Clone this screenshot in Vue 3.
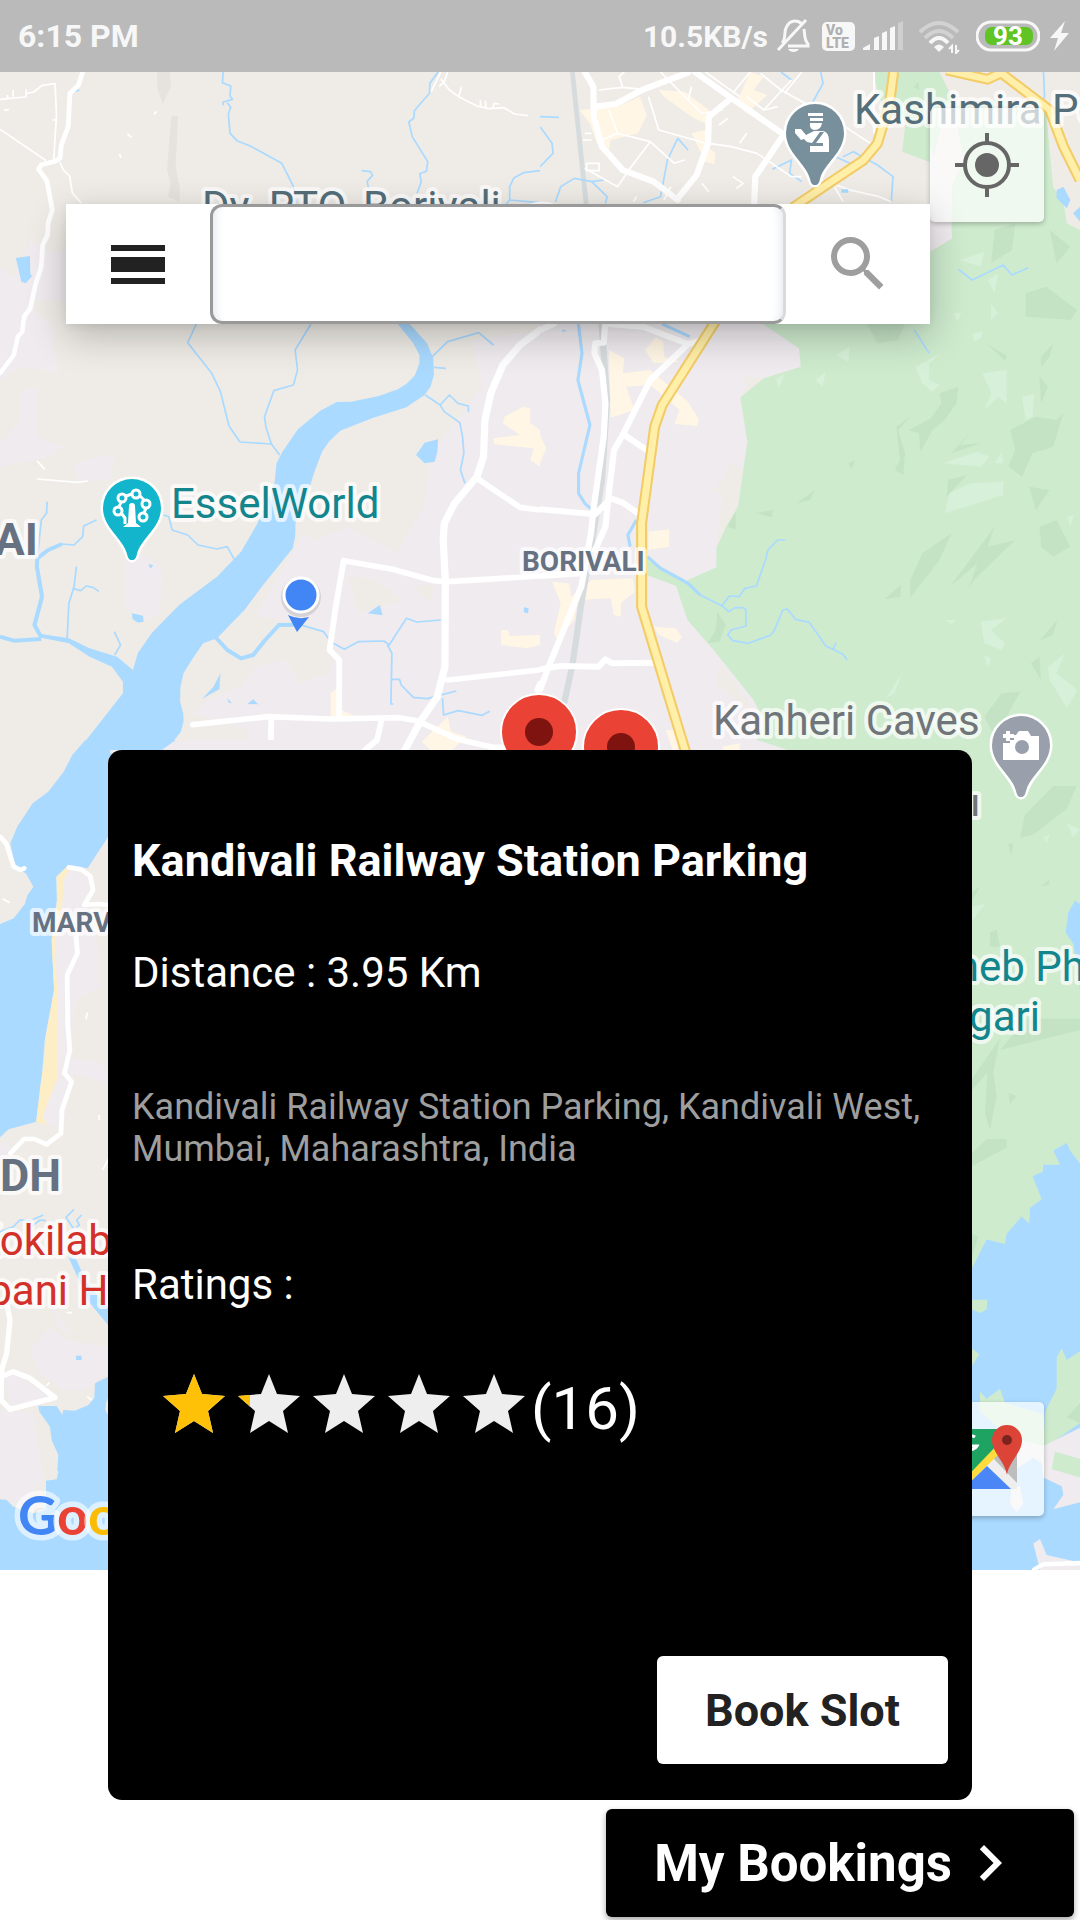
<script setup>
import { ref } from 'vue'

const query = ref('')

const place = {
  name: 'Kandivali Railway Station Parking',
  distance: '3.95 Km',
  address: 'Kandivali Railway Station Parking, Kandivali West, Mumbai, Maharashtra, India',
  reviews: 16,
}

// Width of the golden part of every star, in star units (0 to 62)
const stars = [62, 12, 0, 0, 0]
const starPath = 'M31 0l8 20 23 2-17 15 5 22-19-12-19 12 5-22L0 22l23-2z'
const pinPath = 'M0 52C-3 52-4 50-5 46-9 30-29 20-29 0A29 29 0 0 1 29 0C29 20 9 30 5 46 4 50 3 52 0 52z'
</script>

<template>
  <main class="screen">
    <header class="status">
      <time class="clock">6:15 PM</time>
      <div class="indicators">
        <span class="speed">10.5KB/s</span>
        <svg width="38" height="36" viewBox="0 0 38 36" fill="none" stroke="#f7f7f7" stroke-width="3">
          <path d="M6 25C10 22 8 14 10 10 12 5 16 3 19 3c3 0 5 1 7 3M28 11c1 6 0 11 4 15v2H12M2 32L30 2" />
          <path d="M12 31h11c-2 4-9 4-11 0z" fill="#f7f7f7" stroke="none" />
        </svg>
        <svg width="33" height="36" viewBox="0 0 33 36">
          <rect y="4" width="33" height="29" rx="5" fill="#f7f7f7" />
          <text x="4" y="17" class="volte">Vo</text>
          <text x="4" y="30" class="volte">LTE</text>
        </svg>
        <svg width="47" height="36" viewBox="0 0 47 36" fill="#f7f7f7">
          <path d="M0 32v-2l7-4v6zM11 20l5-2v14h-5zM19 15l5-2v19h-5zM27 10l5-2v24h-5z" />
          <path d="M35 5l5-2v29h-5z" opacity=".35" />
        </svg>
        <svg width="50" height="36" viewBox="0 0 50 36" fill="none" stroke="#f7f7f7" stroke-width="4">
          <path d="M2 14Q21-4 40 14M7 20Q21 6 35 20" opacity=".4" />
          <path d="M12 25Q21 15 30 25" />
          <path d="M16 29q5-5 10 0l-5 5z" fill="#f7f7f7" stroke="none" />
          <path d="M34 35v-7l-3 3M38 27v8l3-3" stroke-width="2" />
        </svg>
        <svg width="64" height="36" viewBox="0 0 64 36">
          <rect x="1" y="4" width="62" height="28" rx="14" fill="none" stroke="#f7f7f7" stroke-width="3" />
          <rect x="9" y="9" width="48" height="18" rx="7" fill="#5fc424" />
          <text x="32" y="27" class="charge">93</text>
        </svg>
        <svg width="22" height="36" viewBox="0 0 22 36"><path d="M17 3L2 20h8L6 33 21 15h-8z" fill="#f7f7f7" /></svg>
      </div>
    </header>

    <section class="map" aria-label="Map">
      <svg class="canvas" viewBox="0 72 1080 1498" preserveAspectRatio="xMidYMin slice">
        <rect y="72" width="1080" height="1498" fill="#efece7" />

        <!-- North west -->
        <svg x="0" y="0" width="540" height="360" viewBox="0 0 1568 1080" preserveAspectRatio="none">
          <path class="urban" d="M0 805L40 830 90 720 130 750 190 760V900H80L130 960 165 1010 90 1080H0z" />
          <path class="shade" d="M456 216H494L496 262 472 312 456 260zM498 348H517L510 500 522 560V605L488 590 495 550 485 510z" />
          <path class="water" d="M46 774L87 768 88 822 93 828 75 850 62 845z" />
          <path class="stream" d="M648 216L646 248 670 258 668 288 675 298 648 306V316M660 308L670 322 663 342 668 400 688 422 725 437 818 490 836 526 852 560 862 610M1272 216L1248 250 1247 280 1203 332 1202 354 1187 366 1197 410 1242 485 1238 514 1219 521 1223 546 1211 580M1050 512L1076 515 1082 526 1066 544 1070 565M1568 512L1520 518 1492 534 1480 560V600L1470 612M1480 600L1568 608M220 274L230 270" />
          <path class="lane" d="M0 298L74 291 78 280 98 276 122 256 160 251 164 345 156 480M0 388L80 444 134 482M174 486L184 510 202 528 210 578 235 608M22 298V285M38 290V270M76 290V268M152 360H166M12 331L26 328M370 402L382 412M447 343L455 334M347 462L351 473M1280 216L1252 275M1300 216L1290 245 1275 260M1280 236L1305 270 1332 290 1385 318 1420 326 1463 323 1494 342 1534 347M1332 290L1340 262M1395 318V300M1410 322V302M1430 325L1435 310 1450 312" />
          <path class="road" stroke-width="14" d="M240 216L228 255 203 280 198 380 178 435 174 475 160 484 120 494 112 508 136 542 152 630 140 668 138 706 124 735 120 800 104 850 88 925 70 950 68 1000 50 1020 38 1080" />
        </svg>

        <!-- North east -->
        <svg x="540" y="0" width="540" height="360" viewBox="0 0 1568 1080" preserveAspectRatio="none">
          <path class="park" d="M972 216H1160L1195 290 1230 480 1195 560V715L1132 755V1080H1568V690L1530 670 1520 610 1490 560 1470 340 1340 300 1180 310 1140 490 1052 455 1062 360 1000 340 975 250z" />
          <path class="urban" d="M1132 440L1180 560 1197 715 1132 755z" />
          <path class="park-dark" d="M1085 260L1100 245V270zM1320 690L1380 670 1370 750 1310 790zM1410 880L1470 860 1560 930 1540 960 1410 950zM1480 690L1540 740 1500 790z" />
          <path class="park-light" d="M1220 780L1290 755 1280 800zM1300 840L1330 820 1320 880zM1200 940H1225L1212 965zM1310 910L1330 940 1310 960z" />
          <path class="block" d="M115 330L225 320 290 290 310 345 285 400 205 420 200 455 165 430 145 370zM345 270L420 275 490 330V375L440 350 360 290zM610 216L650 230 620 270 660 285 600 340 570 310zM440 400L480 390 485 440 510 460 505 492 480 485z" />
          <path class="rail" stroke-width="14" d="M94 216L134 612" />
          <path class="stream" d="M700 216L730 240M815 216L822 250 790 310M0 350L55 352M0 380L35 430 38 460 0 500M45 605L60 560 100 535 150 545 195 590 190 610M150 545L185 540M300 608L350 590 370 480 400 415 430 450M675 508L730 480 725 520 760 545M880 470L910 455 980 495 1025 530 1020 605M835 460L900 490 925 480M1462 216L1465 290 1450 330M1215 808L1255 840 1345 795 1370 825 1418 803" />
          <path class="lane" d="M970 216V400M170 270L240 262 230 230 245 216M240 262L300 268M315 290L345 390 490 432M490 430L555 440 630 460 730 530 760 530M130 400H150M125 420H150M135 490H172V512H135zM180 420L225 400 320 425 265 500 225 560 130 505M320 425L390 490 420 480M200 330L225 400M350 216L430 300 440 260M430 300L470 340 530 330M480 216L580 290M610 216L560 280M730 240L650 330 690 320M650 330L600 290M640 220L700 270 840 350 960 430M760 216L710 280M520 375L545 355M600 400L580 430M470 550L490 575M560 530L590 550 570 565M820 540L900 570 985 590 1020 605M855 560L880 605M380 560L360 600M280 590L272 605" />
          <path class="road" stroke-width="18" d="M130 216L155 260 156 350 180 440 240 510 330 545 400 600M155 320L220 312 300 268 430 218M450 216L550 290 710 405M555 295L490 350 488 430 455 525 400 595M700 415L625 530 622 612" />
          <path class="highway-edge" d="M1027 216L1015 310 980 430 940 480 735 622M1180 210L1300 238 1345 216M1335 216L1480 330 1520 440 1568 540" />
          <path class="highway" d="M1027 216L1015 310 980 430 940 480 735 622M1180 210L1300 238 1345 216M1335 216L1480 330 1520 440 1568 540" />
          <path class="water" d="M1500 570L1520 560 1540 600 1530 625 1500 595zM1548 640L1568 620V665zM875 568H895V578H875z" />
        </svg>

        <!-- West -->
        <svg x="0" y="320" width="540" height="440" viewBox="0 0 1568 1320" preserveAspectRatio="none">
          <path class="urban" d="M1370 60L1568 30V1320H700L720 1230 560 1180 600 1140 700 1100 740 1040 830 1020 870 1090 950 1060 985 1000 900 910 740 890 880 640 920 660 1010 620 1050 640 1150 700 1230 560 1250 400 1400 200zM0 0H140L170 160 60 140 0 180zM60 210L110 200 110 350 185 380 150 410 0 440V370L60 300zM215 430L335 400 320 480 220 485zM390 690L470 740 465 880 420 900 360 860V720z" />
          <path class="land" d="M1010 770L1090 780 1170 840 1040 880zM1200 800L1260 790 1250 850z" />
          <path class="block" d="M1432 355L1510 345 1460 310 1465 290 1520 260 1540 265V310L1568 330V440L1540 420 1550 385 1435 373zM1455 930H1475L1480 948 1568 945V975L1530 985 1455 975zM960 1120L985 1100 990 1170 1060 1200 960 1205zM1225 1265L1300 1190 1310 1235 1355 1250 1280 1320z" />
          <path class="water" d="M1155 12L1200 70 1218 105V130L1205 165 1180 192 1155 208 1100 228 1020 245 978 246 930 272 865 328 820 395 803 430 797 490 770 560 745 615 700 695 630 770 520 855 440 940 400 1000 386 1050 340 1010 260 985 200 955 120 942 112 952 200 970 260 1010 325 1040 357 1085V1120L205 1320H400L465 1290 500 1268 525 1235 533 1205 532 1180 523 1145 524 1100 533 1060 560 1015 590 970 630 955 710 870 760 800 850 685 857 650 858 610 890 530 915 450 935 395 955 365 988 332 1080 295 1180 262 1233 225 1250 200 1260 165 1258 115 1240 70 1190 12z" />
          <path class="water" d="M1208 405L1233 368 1272 358 1270 395 1262 425 1233 430zM1068 880L1103 855 1111 886zM383 880L415 887 417 905 400 908 385 897zM1521 862L1535 865 1533 880 1521 877zM587 1136L620 1100 640 1060 637 1108zM718 1152L735 1138 750 1153zM660 1135L674 1150 664 1148zM431 733L445 735 437 746z" />
          <path class="stream" stroke-width="12" d="M120 952L100 915 122 830 107 740 108 715 140 690 180 672M620 945L660 990 700 1015 735 1005 770 960 810 915 870 914M0 950L40 962 120 957" />
          <path class="stream" d="M180 672L215 675 240 650 243 618 280 600M195 955L200 850 215 800 222 740M210 805L235 812 250 798 270 802 287 814M110 700L120 600 135 580 137 545M333 1005L350 975 332 935M475 585L490 590 500 630 545 645 575 675 630 687 660 680 680 718M870 914L940 935 960 965 1000 988 1040 965 1115 963 1130 975 1180 895 1210 906 1280 900M1125 975L1138 1000 1135 1152H1142M1138 1078H1160L1165 1095 1200 1132 1240 1136 1325 1113M1285 1135L1288 1185 1330 1172 1400 1186 1422 1174M570 12L545 68 615 160 640 215 665 318 697 366 788 372 812 405M903 12L857 90 864 150 852 195 795 212 768 290 772 320 788 372M1255 110L1300 65 1390 38 1433 75M1260 142L1295 145M1235 225L1278 255 1305 225 1330 250 1360 258V275M1278 255L1290 275 1335 308 1343 350 1347 400 1337 450 1350 490" />
          <path class="lane" d="M108 477L225 487 255 483M108 423L130 448" />
          <path class="road" stroke-width="13" d="M68 0L65 35 52 50 40 105 0 160" />
          <path class="road" stroke-width="17" d="M1568 1090L1560 1110M1385 475L1510 562 1568 570M998 722L1140 748 1260 782 1300 785 1568 768M998 722L975 860 957 990 985 1020V1190M1300 1080L1568 1050M560 1214L780 1190 960 1197 1160 1193 1210 1202 1330 1258 1430 1282 1568 1280M788 1190L785 1320M1108 1200L1095 1260 1060 1290" />
          <path class="road" stroke-width="21" d="M1568 30L1510 75 1460 135 1425 220 1408 300 1404 410 1385 470 1320 550 1290 610 1287 660 1293 780 1292 1040 1270 1130 1220 1205 1160 1320" />
        </svg>

        <!-- South east -->
        <svg x="900" y="700" width="180" height="870" viewBox="0 0 540 1516" preserveAspectRatio="none">
          <rect class="park" width="540" height="1516" />
          <path class="park-dark" d="M375 200L460 150H530L500 190 400 235 360 240zM216 660L300 590 280 650 290 690 270 750 255 720 262 650 216 680zM216 790L260 765H320V780L216 812zM380 555H540V575L300 610zM325 250H340L333 272zM425 325L448 312V322zM216 335L240 325 216 350zM270 405L290 400 300 430H270zM325 685L350 690 330 705zM216 930L235 935 216 970z" />
          <path class="park-light" d="M350 130L400 145 380 160zM430 240L450 235 440 250zM500 215L540 225 520 240zM216 360L255 355 216 385z" />
          <path class="water" d="M540 505L520 425 497 405 505 370 525 350 540 355zM216 990L260 940 315 948 320 930 365 900 388 912 390 885 425 870 398 830 428 822 430 810H480L460 785 500 772 510 785 540 808V1516H216z" />
          <path class="park" d="M435 1240L470 1200V1145L485 1130 500 1150 540 1135V1260L430 1305zM216 1045H262L260 1062 240 1068 216 1062zM216 1130L238 1140 216 1160zM240 1240V1205L260 1218 300 1200 315 1225 430 1245 435 1305 330 1285z" />
          <path class="park-dark" d="M500 1250L540 1225V1260z" />
          <path class="urban" d="M330 1285L430 1300 540 1268V1398L460 1410 490 1385 485 1370 430 1355 425 1330 400 1320 350 1340zM335 1370H360L370 1400 350 1415 330 1400zM400 1470L420 1462 440 1490 540 1503V1516H420z" />
          <path class="park" d="M455 1340L465 1310 540 1322V1355z" />
          <path class="road" stroke-width="8" d="M400 1516L430 1506 540 1504" />
        </svg>

        <!-- East -->
        <svg x="540" y="320" width="540" height="440" viewBox="0 0 1568 1320" preserveAspectRatio="none">
          <path class="urban" d="M0 0H1568V1320H0z" />
          <path class="land" d="M650 175L582 232 600 200 590 170zM560 430L500 520 530 520 512 685 575 560 590 450zM525 1030L510 1090 640 1200z" />
          <path class="park" d="M630 0L752 85 757 140 650 175 582 232 602 365 590 450 575 560 540 620 512 685V742L425 782 310 715V765L395 797 428 900 500 985 620 1140 650 1200 630 1260 720 1290V1320H1568V0z" />
          <path class="park-dark" d="M1035 320L1075 290 1040 330 1060 400 1055 465 1030 450 1045 420zM1070 330L1135 295 1165 250 1160 220 1215 200 1210 250 1175 300 1140 330 1105 395 1100 340zM1195 400L1250 335 1220 375 1280 370zM1365 330L1440 290 1500 300 1520 280 1490 380 1430 400 1400 470 1360 440 1380 390zM1185 480L1240 465 1180 530zM1000 838L1048 795 1047 830zM1075 780L1110 700 1195 640 1160 720 1075 833zM1190 800L1320 620 1300 680 1380 660 1260 780 1245 805 1270 730zM1450 620L1500 600 1540 680 1490 710 1455 680zM1420 500L1480 510 1440 570zM745 550L798 510 785 540zM625 580L675 570 675 592zM545 620L568 575V630zM515 875L540 915 520 965 487 970 510 930zM1290 1190L1340 1120 1395 1115 1360 1180 1320 1250zM1450 962L1502 900 1490 945zM1425 1030L1450 1010 1455 1080zM1295 70L1357 108 1350 122zM1455 110L1490 70 1480 110 1455 140zM1450 170L1475 200 1455 250zM895 430L915 420 905 447zM950 12H1060L1040 60 980 70z" />
          <path class="park-light" d="M1090 140L1165 100 1130 130V180L1160 195 1140 215 1110 190zM1170 430L1270 395 1305 410 1280 440zM1250 490L1345 485V525L1175 580 1190 520zM1280 905L1355 895 1310 930 1350 970 1340 990 1290 970zM1475 1040L1525 1000 1500 1060 1560 1110 1530 1165 1480 1080zM800 180L830 155 820 200zM860 105L900 80 895 125zM1400 230L1435 220 1430 290 1410 300zM1285 160L1355 150V250L1330 230 1290 270 1310 220zM1005 1135L1050 1060 1030 1120zM685 180L710 160 695 205zM1255 40L1285 35 1280 55 1260 65zM1175 900H1210L1195 912zM1290 1005L1310 1015 1300 1045zM1320 430L1340 395 1345 430zM1530 590L1550 585 1540 620z" />
          <path class="block" d="M200 90L245 115 240 160 320 150 430 245 462 300 455 318 390 312 405 270 320 195 250 200 275 270 205 293zM305 90L335 52 358 65 360 110 405 125 330 130zM315 635L375 628V680L315 690zM35 785L85 790 90 830 150 780 270 775 275 815 235 850V890L215 885 205 835 110 840 100 900 50 960 40 940 60 850zM330 920L395 925 412 950 400 968 345 945zM0 345L18 385 0 430zM365 1230H400V1290H385zM530 1280L580 1270V1290H530z" />
          <path class="rail" stroke-width="18" d="M178 0L195 240 180 480 155 640 120 850 95 1030 70 1150" />
          <path class="stream" stroke-width="9" d="M110 0L122 100 110 180 145 315 112 460V520L130 550 150 568M355 12L435 50M280 600L255 645 262 680M312 710L350 745 430 790 465 825" />
          <path class="stream" d="M465 825L528 857 550 828 578 830 595 805 628 798 655 720 662 690 690 660H713M528 857L548 875 567 863H590L598 870V918L555 930 545 945 560 962 605 970 670 945 680 932 705 870 718 867 742 898 782 907 830 978 850 988 880 1003 892 1020M850 990L860 968M1087 30L1130 100M64 32H74" />
          <path class="road" stroke-width="18" d="M190 0L185 68 160 70 158 100 180 150 190 250 185 350 155 570 148 640 120 800 25 1040 0 1110M0 30L40 12M200 12L300 20 430 72 470 60M430 72L320 180 240 345 215 390 200 520 190 620 160 690M245 345L310 390M0 568L160 583 205 535 240 548 285 580M0 768L120 760M0 1048L60 1038 170 1040 190 1018 210 1030 330 1028" />
          <path class="highway-edge" d="M512 0L355 255 333 320 295 610V860L330 980 430 1320" />
          <path class="highway" d="M512 0L355 255 333 320 295 610V860L330 980 430 1320" />
        </svg>

        <!-- Coast -->
        <svg x="0" y="740" width="540" height="440" viewBox="0 0 1568 1320" preserveAspectRatio="none">
          <path class="urban" d="M200 390L260 410 250 490 290 650 290 740 220 780 200 950 300 970 314 1030 214 1000 180 1170 110 1140 168 1020 160 610 185 420zM0 1220L20 1200 40 1230 0 1260zM320 0H1000V40H320z" />
          <path class="water" d="M248 0L210 45 185 95 140 155 95 190 50 260 30 310 45 385 75 400 97 440 80 465 72 492 40 535 0 552V1192L25 1168 105 1145 120 1030 130 900 135 870 157 750 150 600 165 480 163 410 195 380 255 384 314 290V30L470 30 510 0z" />
          <path class="sand" d="M195 378L165 410 168 480 150 600 157 750 135 880 128 970 118 1030 105 1145 135 1155 125 1125 168 1010V800L160 610 180 500 185 420 200 390z" />
          <path class="road" stroke-width="14" d="M0 290L18 310 40 380 60 390 70 385M200 382L235 388 262 408 270 450 245 495 285 492 314 495M220 580L225 640 195 705 197 860 203 930 187 1000 208 1025 180 1110 177 1180 135 1213 100 1197H70L30 1240" />
          <path class="lane" d="M8 476L28 488M250 838L253 818M288 1125V1140M298 1290L314 1258" />
        </svg>

        <!-- South west -->
        <svg x="0" y="1160" width="400" height="410" viewBox="0 0 1200 1230" preserveAspectRatio="none">
          <path class="urban" d="M90 570L150 500 200 540 324 560V640L260 690H190L120 640zM0 750L100 760 130 960 60 1040 0 1010zM10 640L40 640 150 710 30 740zM160 440L220 530 170 500z" />
          <path class="water" d="M115 738L118 755 150 800 155 840 175 885 172 930 175 935 170 958 138 962V1050L100 1060 40 1040 20 1020 0 1018V1230H1200V650H324L285 670 283 715 265 735 225 752 190 750 187 765 170 738zM200 280L230 300 260 370 324 440V495L270 430 255 400zM228 587H245V600H228z" />
          <path class="land" d="M318 728L324 715V765L316 750z" />
          <path class="stream" d="M0 215L40 200 60 180 90 182 130 165M95 200L120 180 138 182M222 148L198 172 220 205M245 165L230 180 238 195 228 202" />
          <path class="lane" d="M200 458H216M138 678L148 668M262 710L275 720M308 30L324 0" />
          <path class="road" stroke-width="16" d="M20 430L30 480 20 580 5 630 3 720 30 748 165 713 90 655 40 635 5 650" />
        </svg>

        <!-- Place names -->
        <g class="labels">
          <text x="202" y="221" class="slate">Dy. RTO, Borivali</text>
          <text x="854" y="124" class="slate">Kashimira Police</text>
          <text x="171" y="518" class="teal">EsselWorld</text>
          <text x="713" y="735" class="gray">Kanheri Caves</text>
          <text x="979" y="816" class="gray end area">l</text>
          <text x="933" y="981" class="teal">aheb Phalke</text>
          <text x="1040" y="1031" class="teal end">nagari</text>
          <text x="-26" y="1255" class="red">Kokilab</text>
          <text x="-76" y="1305" class="red">Ambani H</text>
          <text x="38" y="555" class="city end">AI</text>
          <text x="61" y="1191" class="city end">DH</text>
          <text x="522" y="571" class="area">BORIVALI</text>
          <text x="32" y="932" class="area">MARV</text>
        </g>
        <text x="18" y="1535" class="brand"><tspan fill="#4285f4">G</tspan><tspan fill="#ea4335">o</tspan><tspan fill="#fbbc05">o</tspan></text>

        <!-- Place pins -->
        <circle cx="542" cy="233" r="30" fill="#78909c" stroke="#fff" stroke-width="3" />
        <g transform="translate(815 133)">
          <path :d="pinPath" fill="#78909c" class="pin" />
          <path fill="#fff" d="M-7-20H8V-17H-7zM-5-15H8V-12H-5zM-5-10H7Q6-3 0-3T-5-10zM-20-4L-14-4-9 2-1-2H8Q14-1 14 8V19H-5V13H8V10H1L9-1H5L-3 10-8 9-11 6-14 7-20 0z" />
        </g>
        <g transform="translate(132 508)">
          <path :d="pinPath" fill="#12b5cb" class="pin" />
          <g fill="none" stroke="#fff" stroke-width="3">
            <circle cx="-14" cy="3" r="4" /><circle cx="-10" cy="-10" r="4" /><circle cx="4" cy="-14" r="4" />
            <circle cx="14" cy="-4" r="4" /><circle cx="11" cy="9" r="4" />
            <path d="M-13-1L-11-6M-6-12L0-14M8-12L12-8M14 0L12 5M-10 6L-7 10V16" />
          </g>
          <path fill="#fff" d="M-3-2a3 3 0 0 1 6 0L4 15 9 19H-9L-4 15z" />
        </g>
        <g transform="translate(1021 745)">
          <path :d="pinPath" fill="#9aa0ab" class="pin" />
          <path fill="#fff" d="M-15-14h4v3h4v4h-4v3h-4v-3h-3v-4h3zM-18-2h7v-3h4v-5H-5l3-4H7L10-9h8V15H-18z" />
          <circle cx="1" cy="2" r="7" fill="#9aa0ab" />
        </g>

        <!-- Current location and parking spots -->
        <circle cx="301" cy="597" r="20" fill="#000" opacity=".1" />
        <circle cx="301" cy="595" r="17" fill="#4285f4" stroke="#fff" stroke-width="3" />
        <path d="M288 615Q298 620 309 617L297 632z" fill="#4285f4" />
        <g fill="#ea4335" stroke="#fff" stroke-width="2">
          <circle cx="539" cy="732" r="38" /><circle cx="621" cy="747" r="38" />
        </g>
        <g fill="#7f1310"><circle cx="539" cy="732" r="14" /><circle cx="621" cy="747" r="14" /></g>
      </svg>

      <button class="tool locate" type="button" aria-label="My location">
        <svg width="66" height="66" viewBox="0 0 66 66" fill="none" stroke="#666" stroke-width="4">
          <circle cx="33" cy="33" r="22" />
          <circle cx="33" cy="33" r="12" fill="#666" stroke="none" />
          <path d="M33 1V11M33 55V65M1 33H11M55 33H65" />
        </svg>
      </button>

      <button class="tool open-maps" type="button" aria-label="Open in Maps">
        <svg width="84" height="84" viewBox="0 0 84 84">
          <path fill="#1ea362" d="M12 12H60V22L12 70z" />
          <path fill="#bdbdbd" d="M48 42L60 28 72 34V68z" />
          <path fill="#eee" d="M42 49L48 41 72 66V72H66z" />
          <path fill="#ffdb3d" d="M12 70L54 26 58 33 18 72H12z" />
          <path fill="#4a86f5" d="M18 72L42 49 66 72z" />
          <path d="M30 20a7 7 0 1 0 2 9h-6" fill="none" stroke="#fff" stroke-width="3" />
          <path fill="#db4437" d="M62 58C60 44 47 36 47 23a15 15 0 0 1 30 0C77 36 64 44 62 58z" />
          <circle cx="62" cy="23" r="5" fill="#7b231e" />
        </svg>
      </button>

      <form class="search" role="search" @submit.prevent>
        <button class="side" type="button" aria-label="Menu">
          <svg width="54" height="39" viewBox="0 0 54 39"><path d="M0 0H54V6H0zM0 12H54V27H0zM0 33H54V39H0z" fill="#222" /></svg>
        </button>
        <input v-model="query" type="text" aria-label="Search for parking" />
        <button class="side" type="submit" aria-label="Search">
          <svg width="72" height="72" viewBox="0 0 24 24"><path fill="#9e9e9e" d="M15.5 14h-.79l-.28-.27A6.47 6.47 0 0 0 16 9.5 6.5 6.5 0 1 0 9.500 16c1.610 0 3.090-.590 4.230-1.570l.270.280v.790l5 4.990L20.490 19l-4.990-5zm-6 0C7.010 14 5 11.990 5 9.500S7.010 5 9.500 5 14 7.010 14 9.500 11.990 14 9.500 14z" /></svg>
        </button>
      </form>
    </section>

    <footer class="bottom">
      <button class="bookings" type="button">
        My Bookings
        <svg width="72" height="72" viewBox="0 0 24 24"><path fill="#fff" d="M10 6L8.590 7.410 13.170 12l-4.580 4.590L10 18l6-6z" /></svg>
      </button>
    </footer>

    <section class="card" role="dialog" aria-labelledby="place-name">
      <h1 id="place-name">{{ place.name }}</h1>
      <p class="distance">Distance : {{ place.distance }}</p>
      <p class="address">{{ place.address }}</p>
      <p class="ratings">Ratings :</p>
      <div class="score">
        <svg v-for="(gold, i) in stars" :key="i" class="star" width="62" height="60" viewBox="0 0 62 60">
          <clipPath :id="'gold-' + i"><rect :width="gold" height="60" /></clipPath>
          <path :d="starPath" fill="#eee" />
          <path :d="starPath" fill="#ffc107" :clip-path="'url(#gold-' + i + ')'" />
        </svg>
        <span class="reviews">({{ place.reviews }})</span>
      </div>
      <button class="book" type="button">Book Slot</button>
    </section>
  </main>
</template>

<style>
body {
  margin: 0;
  background: #fff;
}
</style>

<style scoped>
.screen {
  position: relative;
  display: flex;
  flex-direction: column;
  min-height: 100vh;
  overflow: hidden;
  font-family: Roboto, "Liberation Sans", sans-serif;
}

button {
  display: flex;
  align-items: center;
  justify-content: center;
  margin: 0;
  padding: 0;
  border: 0;
  font-family: inherit;
  cursor: pointer;
}

.status {
  display: flex;
  align-items: center;
  justify-content: space-between;
  height: 72px;
  padding: 0 10px 0 18px;
  box-sizing: border-box;
  background: #bababa;
  color: #f7f7f7;
  font-weight: 700;
}

.clock {
  font-size: 32px;
}

.indicators {
  display: flex;
  align-items: center;
  gap: 8px;
}

.speed {
  font-size: 30px;
}

.volte {
  fill: #b0b0b0;
  font-size: 14px;
  font-weight: 900;
}

.charge {
  fill: #fff;
  font-size: 26px;
  text-anchor: middle;
}

.map {
  position: relative;
  flex: 1;
}

.canvas {
  position: absolute;
  inset: 0;
  width: 100%;
  height: 100%;
}

.urban { fill: #efebef; }
.land { fill: #efece7; }
.shade { fill: #e6e3df; }
.water { fill: #aadaff; }
.park { fill: #ceebce; }
.park-dark { fill: #c4e3c5; }
.park-light { fill: #d7f0d9; }
.block { fill: #fff6e5; }
.sand { fill: #fdeec5; }

.stream,
.lane,
.road,
.rail,
.highway,
.highway-edge {
  fill: none;
  stroke-linejoin: round;
}

.stream { stroke: #aadaff; }
.lane { stroke: #fff; }
.road { stroke: #fff; stroke-linecap: round; }
.rail { stroke: #d6dbdd; }
.highway-edge { stroke: #f3cc68; stroke-width: 32px; }
.highway { stroke: #ffefa8; stroke-width: 20px; }
.stream:not([stroke-width]) { stroke-width: 5px; }
.lane { stroke-width: 5px; }

.labels text {
  font-size: 42px;
  paint-order: stroke;
  stroke: rgba(255, 255, 255, 0.7);
  stroke-width: 8px;
  stroke-linejoin: round;
}

.labels .slate { fill: #546e7a; }
.labels .teal { fill: #12858d; }
.labels .gray { fill: #70757a; }
.labels .red { fill: #d33029; }
.labels .end { text-anchor: end; }

.labels .city {
  fill: #667282;
  font-size: 45px;
  font-weight: 700;
}

.labels .area {
  font-size: 28px;
  font-weight: 700;
}

.labels .area:not(.gray) {
  fill: #667282;
}

.brand {
  font-family: Lato, sans-serif;
  font-size: 54px;
  font-weight: 700;
  paint-order: stroke;
  stroke: rgba(255, 255, 255, 0.6);
  stroke-width: 11px;
  stroke-linejoin: round;
}

.pin {
  paint-order: stroke;
  stroke: #fff;
  stroke-width: 5px;
}

.tool {
  position: absolute;
  right: 36px;
  width: 114px;
  height: 114px;
  border-radius: 5px;
  background: rgba(255, 255, 255, 0.7);
  box-shadow: 0 2px 5px rgba(0, 0, 0, 0.25);
}

.locate { top: 36px; }
.open-maps { bottom: 54px; }

.search {
  position: absolute;
  top: 132px;
  left: 66px;
  right: 150px;
  display: flex;
  height: 120px;
  background: #fff;
  box-shadow: 0 12px 36px rgba(0, 0, 0, 0.24), 0 2px 8px rgba(0, 0, 0, 0.06);
}

.side {
  width: 144px;
  background: #fff;
}

.search input {
  flex: 1;
  min-width: 0;
  box-sizing: border-box;
  padding: 0 24px;
  border: 3px solid #999;
  border-right-color: #d8dadc;
  border-radius: 12px;
  outline: 0;
  background: #fff;
  box-shadow: inset 10px 0 10px -8px #e4e7ec, inset -10px 0 10px -8px #e4e7ec;
  font: 42px Roboto, sans-serif;
}

.bottom {
  display: flex;
  align-items: flex-end;
  justify-content: flex-end;
  height: 350px;
  padding: 0 6px 3px;
  box-sizing: border-box;
}

.bookings {
  gap: 2px;
  height: 108px;
  padding: 0 48px;
  border-radius: 6px;
  background: #000;
  box-shadow: 0 3px 6px rgba(0, 0, 0, 0.35);
  color: #fff;
  font-size: 51px;
  font-weight: 700;
}

.card {
  position: absolute;
  top: 750px;
  bottom: 120px;
  left: 10%;
  right: 10%;
  display: flex;
  flex-direction: column;
  padding: 85px 24px 36px;
  box-sizing: border-box;
  border-radius: 14px;
  background: #000;
  color: #fff;
}

h1,
p {
  margin: 0;
}

h1 {
  font-size: 45px;
  line-height: 52px;
}

.distance,
.ratings {
  font-size: 42px;
  line-height: 50px;
}

.distance {
  margin-top: 61px;
}

.address {
  margin-top: 88px;
  color: #9e9e9e;
  font-size: 36px;
  line-height: 42px;
}

.ratings {
  margin-top: 90px;
}

.score {
  display: flex;
  align-items: flex-start;
  gap: 13px;
  margin-top: 64px;
  padding-left: 31px;
}

.reviews {
  margin-left: -7px;
  font-size: 60px;
  line-height: 70px;
}

.book {
  align-self: flex-end;
  height: 108px;
  margin-top: auto;
  padding: 0 48px;
  border-radius: 6px;
  background: #fff;
  color: #222;
  font-size: 45px;
  font-weight: 700;
}
</style>
